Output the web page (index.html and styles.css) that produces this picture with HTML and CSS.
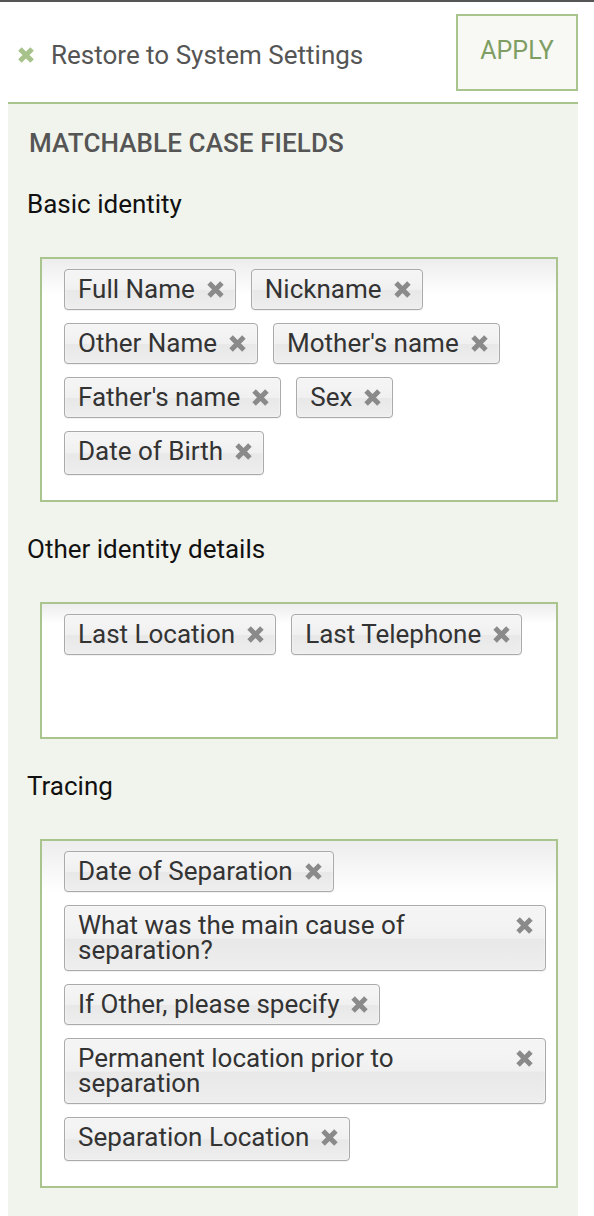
FILE: index.html
```html
<!DOCTYPE html>
<html lang="en">
<head>
<meta charset="utf-8">
<title>Matchable case fields</title>
<link rel="stylesheet" href="styles.css">
</head>
<body>
<div class="page">
  <div class="wrap">
    <header class="header">
      <a class="restore" href="#">
        <svg class="restore-icon" viewBox="0 0 16 16" aria-hidden="true"><path d="M2.6 2.6L13.4 13.4M13.4 2.6L2.6 13.4"/></svg>
        <span>Restore to System Settings</span>
      </a>
      <button class="apply" type="button">APPLY</button>
    </header>
    <main class="panel">
      <h2 class="title">MATCHABLE CASE FIELDS</h2>

      <section class="group">
        <h3 class="group-head">Basic identity</h3>
        <ul class="choices">
          <li class="tag"><span class="tag-text">Full Name</span><svg class="x" viewBox="0 0 16 16"><path d="M2.6 2.6L13.4 13.4M13.4 2.6L2.6 13.4"/></svg></li>
          <li class="tag"><span class="tag-text">Nickname</span><svg class="x" viewBox="0 0 16 16"><path d="M2.6 2.6L13.4 13.4M13.4 2.6L2.6 13.4"/></svg></li>
          <li class="tag"><span class="tag-text">Other Name</span><svg class="x" viewBox="0 0 16 16"><path d="M2.6 2.6L13.4 13.4M13.4 2.6L2.6 13.4"/></svg></li>
          <li class="tag"><span class="tag-text">Mother's name</span><svg class="x" viewBox="0 0 16 16"><path d="M2.6 2.6L13.4 13.4M13.4 2.6L2.6 13.4"/></svg></li>
          <li class="tag"><span class="tag-text">Father's name</span><svg class="x" viewBox="0 0 16 16"><path d="M2.6 2.6L13.4 13.4M13.4 2.6L2.6 13.4"/></svg></li>
          <li class="tag"><span class="tag-text">Sex</span><svg class="x" viewBox="0 0 16 16"><path d="M2.6 2.6L13.4 13.4M13.4 2.6L2.6 13.4"/></svg></li>
          <li class="tag"><span class="tag-text">Date of Birth</span><svg class="x" viewBox="0 0 16 16"><path d="M2.6 2.6L13.4 13.4M13.4 2.6L2.6 13.4"/></svg></li>
          <li class="search"></li>
        </ul>
      </section>

      <section class="group">
        <h3 class="group-head">Other identity details</h3>
        <ul class="choices">
          <li class="tag"><span class="tag-text">Last Location</span><svg class="x" viewBox="0 0 16 16"><path d="M2.6 2.6L13.4 13.4M13.4 2.6L2.6 13.4"/></svg></li>
          <li class="tag"><span class="tag-text">Last Telephone</span><svg class="x" viewBox="0 0 16 16"><path d="M2.6 2.6L13.4 13.4M13.4 2.6L2.6 13.4"/></svg></li>
          <li class="search"></li>
        </ul>
      </section>

      <section class="group">
        <h3 class="group-head">Tracing</h3>
        <ul class="choices">
          <li class="tag"><span class="tag-text">Date of Separation</span><svg class="x" viewBox="0 0 16 16"><path d="M2.6 2.6L13.4 13.4M13.4 2.6L2.6 13.4"/></svg></li>
          <li class="tag tag-wide"><span class="tag-text">What was the main cause of separation?</span><svg class="x" viewBox="0 0 16 16"><path d="M2.6 2.6L13.4 13.4M13.4 2.6L2.6 13.4"/></svg></li>
          <li class="tag"><span class="tag-text">If Other, please specify</span><svg class="x" viewBox="0 0 16 16"><path d="M2.6 2.6L13.4 13.4M13.4 2.6L2.6 13.4"/></svg></li>
          <li class="tag tag-wide"><span class="tag-text">Permanent location prior to separation</span><svg class="x" viewBox="0 0 16 16"><path d="M2.6 2.6L13.4 13.4M13.4 2.6L2.6 13.4"/></svg></li>
          <li class="tag"><span class="tag-text">Separation Location</span><svg class="x" viewBox="0 0 16 16"><path d="M2.6 2.6L13.4 13.4M13.4 2.6L2.6 13.4"/></svg></li>
          <li class="search"></li>
        </ul>
      </section>
    </main>
  </div>
</div>
</body>
</html>
```

FILE: styles.css
```css
* { box-sizing: border-box; }

html, body {
  margin: 0;
  padding: 0;
  background: #ffffff;
}

body {
  font-family: Roboto, "Liberation Sans", Arial, sans-serif;
  font-size: 26px;
  color: #222;
}

.page {
  border-top: 2px solid #555555;
  min-height: 1214px;
}

.wrap {
  margin: 0 16px 0 8px;
}

.header {
  display: flex;
  justify-content: space-between;
  align-items: flex-start;
  padding: 12px 0 11px 0;
  border-bottom: 2px solid #a9c48c;
}

.restore {
  display: flex;
  align-items: center;
  gap: 16px;
  margin-top: 27px;
  padding-left: 9px;
  line-height: 28px;
  color: #555555;
  text-decoration: none;
}

.restore-icon {
  width: 18px;
  height: 18px;
  flex: none;
  fill: none;
  stroke: #a7c38b;
  stroke-width: 4.4;
}

.apply {
  width: 122px;
  height: 77px;
  border: 2px solid #a9c48c;
  background: #f8f9f5;
  color: #7f9e63;
  font-family: Roboto, "Liberation Sans", Arial, sans-serif;
  font-size: 25px;
  font-weight: 400;
  padding: 0 0 4px 0;
  margin: 0;
  cursor: pointer;
}

.panel {
  background: #f1f4ec;
  padding: 25px 20px 40px 19px;
}

.title {
  margin: 0;
  font-size: 26px;
  font-weight: 500;
  line-height: 28px;
  color: #555555;
  padding-left: 2px;
  letter-spacing: 0.1px;
}

.group-head {
  margin: 33px 0 39px 0;
  font-size: 26px;
  font-weight: 400;
  line-height: 28px;
  color: #111111;
}

.choices {
  list-style: none;
  margin: 0 0 0 13px;
  padding: 10px 10px 25px 22px;
  border: 2px solid #a9c48c;
  background-color: #ffffff;
  background-image: linear-gradient(to bottom, #eeeeee 1%, #ffffff 15%);
  display: flex;
  flex-wrap: wrap;
  gap: 13px 15px;
}

.tag {
  display: flex;
  align-items: flex-start;
  gap: 11px;
  max-width: 100%;
  padding: 7px 10px 7px 13px;
  line-height: 25px;
  color: #333333;
  border: 1px solid #aaaaaa;
  border-radius: 4px;
  background-color: #e4e4e4;
  background-image: linear-gradient(to bottom, #f4f4f4 20%, #f0f0f0 50%, #e8e8e8 52%, #eeeeee 100%);
  box-shadow: inset 0 0 2px #ffffff, 0 1px 0 rgba(0, 0, 0, 0.05);
}

.tag-wide {
  flex: 1 1 100%;
}

.tag-text {
  flex: 1 1 auto;
  min-width: 0;
}

.x {
  flex: none;
  width: 19px;
  height: 19px;
  margin-top: 3px;
  fill: none;
  stroke: #8a8a8a;
  stroke-width: 4.2;
}

.tag-wide .x {
  margin-right: 1px;
}

.search {
  flex: 1 1 60px;
  min-width: 60px;
  height: 44px;
}
```
